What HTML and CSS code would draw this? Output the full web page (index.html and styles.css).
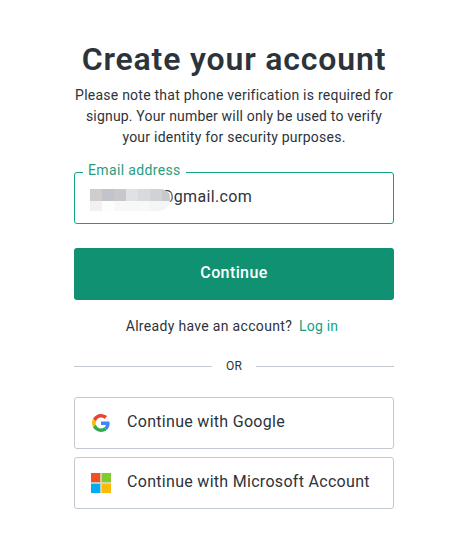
FILE: index.html
```html
<!DOCTYPE html>
<html lang="en">
<head>
<meta charset="utf-8">
<title>Create your account</title>
<link rel="stylesheet" href="styles.css">
</head>
<body>
<main class="signup">
  <h1 class="title"><span>Create your account</span></h1>
  <p class="note"><span class="n1">Please note that phone verification is required for</span><br><span class="n2">signup. Your number will only be used to verify</span><br><span class="n3">your identity for security purposes.</span></p>
  <div class="field">
    <span class="label">Email address</span>
    <span class="mask" aria-hidden="true"><i></i><i></i><i></i><i></i><i></i><i></i><i></i><i></i><i></i><i></i><i></i><i></i><i></i><i></i></span>
    <span class="value">@gmail.com</span>
  </div>
  <button class="submit"><span>Continue</span></button>
  <p class="login"><span class="ask">Already have an account?</span><a class="link">Log in</a></p>
  <div class="divider"><span>OR</span></div>
  <div class="providers">
    <button class="provider">
      <svg class="google" viewBox="0 0 48 48"><path fill="#EA4335" d="M24 9.5c3.54 0 6.71 1.22 9.21 3.6l6.85-6.85C35.9 2.38 30.47 0 24 0 14.62 0 6.51 5.38 2.56 13.22l7.98 6.19C12.43 13.72 17.74 9.5 24 9.5z"/><path fill="#4285F4" d="M46.98 24.55c0-1.57-.15-3.09-.38-4.55H24v9.02h12.94c-.58 2.96-2.26 5.48-4.78 7.18l7.73 6c4.51-4.18 7.09-10.36 7.09-17.65z"/><path fill="#FBBC05" d="M10.53 28.59A14.5 14.5 0 0 1 9.77 24c0-1.6.27-3.14.76-4.59l-7.98-6.19A23.9 23.9 0 0 0 0 24c0 3.88.92 7.54 2.56 10.78z"/><path fill="#34A853" d="M24 48c6.48 0 11.93-2.13 15.89-5.81l-7.73-6c-2.15 1.45-4.92 2.3-8.16 2.3-6.26 0-11.57-4.22-13.47-9.91l-7.98 6.19C6.51 42.62 14.62 48 24 48z"/></svg>
      <span class="g-text">Continue with Google</span>
    </button>
    <button class="provider">
      <svg class="microsoft" viewBox="0 0 20 20"><path fill="#ddd8cc" d="M0 0h20v20H0z"/><path fill="#f25022" d="M0 0h9.2v9.2H0z"/><path fill="#80cc28" d="M10.8 0H20v9.2h-9.2z"/><path fill="#00adef" d="M0 10.8h9.2V20H0z"/><path fill="#fbbc09" d="M10.8 10.8H20V20h-9.2z"/></svg>
      <span class="m-text">Continue with Microsoft Account</span>
    </button>
  </div>
</main>
</body>
</html>
```
FILE: styles.css
```css
* { box-sizing: border-box; }
body { margin: 0; background: #fff; color: #2d333a; font-family: Roboto, "Liberation Sans", sans-serif; font-weight: 400; }
button { font: inherit; color: inherit; }
.signup { width: 320px; margin-left: 74px; padding-top: 40px; }
.title { margin: 0; height: 45px; font-size: 32px; line-height: 38px; font-weight: 600; text-align: center; white-space: nowrap; letter-spacing: 0.83px; }
.note { margin: 0; font-size: 14px; line-height: 21px; text-align: center; white-space: nowrap; }
.n1 { letter-spacing: 0.24px; }
.n2 { letter-spacing: 0.18px; }
.n3 { letter-spacing: 0.23px; }
.field { position: relative; display: flex; height: 52px; margin-top: 24px; padding: 16px 15px; border: 1px solid #10a37f; border-radius: 3px; }
.label { position: absolute; left: 8px; top: -12px; padding: 0 5px; background: #fff; color: #2a9c80; font-size: 14px; line-height: 18px; letter-spacing: 0.36px; white-space: nowrap; }
.mask { display: grid; grid-template-columns: repeat(6, 12px) 8px; grid-template-rows: 12px 10px; width: 80px; height: 22px; border-radius: 0 9px 11px 0; overflow: hidden; position: relative; z-index: 1; }
.mask i:nth-child(1) { background: #d0cecd; }
.mask i:nth-child(2) { background: #c1c5ca; }
.mask i:nth-child(3) { background: #c8c8cc; }
.mask i:nth-child(4) { background: #e0e1e5; }
.mask i:nth-child(5) { background: #d8dadd; }
.mask i:nth-child(6) { background: #d0d3d6; }
.mask i:nth-child(7) { background: #c8c9ca; }
.mask i:nth-child(8) { background: #f1f1f2; }
.mask i:nth-child(9) { background: #fdfdfd; }
.mask i:nth-child(n+10) { background: #f8f8f9; }
.mask i:nth-child(n+13) { background: #f4f5f6; }
.value { margin-left: -11px; font-size: 16px; line-height: 16px; letter-spacing: 0.34px; }
.submit { display: block; width: 100%; height: 52px; margin-top: 24px; padding: 0 0 3px; border: 0; border-radius: 3px; background: #109272; color: #fff; font-size: 16px; font-weight: 500; letter-spacing: 0.4px; }
.login { display: flex; justify-content: center; gap: 7px; margin: 16px 4px 0 0; font-size: 14px; line-height: 21px; letter-spacing: 0.32px; white-space: nowrap; }
.link { color: #10a37f; letter-spacing: 0.2px; }
.divider { display: flex; align-items: center; height: 18px; margin-top: 20px; font-size: 12px; }
.divider::before, .divider::after { content: ""; flex: 1; height: 1px; background: #c2c8d0; }
.divider span { width: 44px; text-align: center; letter-spacing: 0.2px; }
.providers { display: grid; gap: 8px; margin-top: 22px; }
.provider { display: flex; align-items: center; height: 52px; padding: 0 16px; background: #fff; border: 1px solid #c2c8d0; border-radius: 3px; font-size: 16px; letter-spacing: 0.3px; white-space: nowrap; }
.provider svg { width: 20px; height: 20px; margin-right: 16px; }
.provider .google { width: 18px; height: 18px; margin: 0 17px; margin-left: 1px; }
.provider span { padding-bottom: 3px; }
```
